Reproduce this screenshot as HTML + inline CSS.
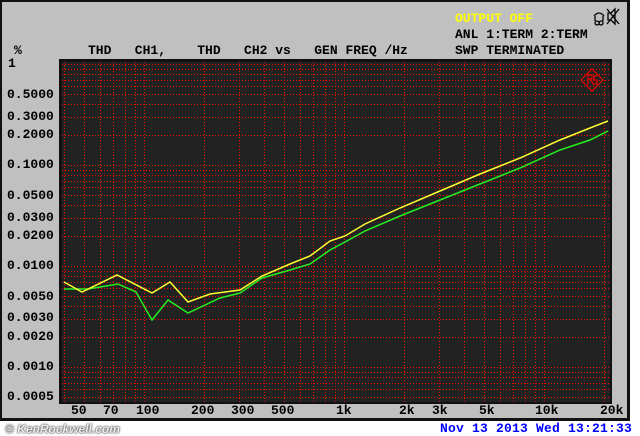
<!DOCTYPE html>
<html><head><style>
body{margin:0;width:640px;height:436px;background:#fff;position:relative;overflow:hidden;font-family:"Liberation Mono",monospace;font-weight:bold;font-size:13px}
#frame{position:absolute;left:0;top:0;width:625px;height:416px;background:#c0c0c0;border:2px solid #111;border-right:3px solid #111;border-bottom:3px solid #111}
.t{position:absolute;white-space:pre;color:#000;line-height:14px}
</style></head><body>
<div id="frame"></div>
<svg width="640" height="436" style="position:absolute;left:0;top:0">
<rect x="59" y="59" width="553" height="345" fill="#111"/>
<rect x="62" y="62" width="548" height="340" fill="#222"/>
<g stroke="#f00" stroke-width="1" stroke-dasharray="1,2" id="g"></g>
<g fill="none" stroke="#e00" stroke-width="1.2">
<path d="M592 69 L603 80 L592 91 L581 80 Z"/>
<path d="M588 75 L588 85 M588 75 L592 75 L592 79 L588 79 M590 79 L594 85 M597 76 L594 76 L594 80 L597 80 L597 84 L594 84"/>
</g>
<g fill="none" stroke="#000" stroke-width="1.3">
<path d="M594 16 Q599 10 604 16 M595 16 L595 21 M603 16 L603 21 M597 21 A2 2 0 1 0 597.1 21 M601 21 A2 2 0 1 0 601.1 21"/>
<path d="M608 13 L608 20 L611 20 L615 24 L615 9 L611 13 Z M607 9 L619 24 M619 9 L607 24"/>
</g>
<polyline fill="none" stroke="#2e2" stroke-width="1.5" points="64,289 88,289 118,284 136,292 152,320 168,300 188,313 220,298 240,293 262,278 290,270 310,264 330,250 345,242 365,231 400,216 440,200 480,184 520,168 560,150 590,140 608,131"/>
<polyline fill="none" stroke="#ff3" stroke-width="1.5" points="64,282 82,292 117,275 152,293 170,282 188,302 210,294 240,290 262,276 290,264 310,256 330,241 345,236 365,224 400,208 440,191 480,174 520,158 560,140 590,128 608,121"/>
</svg>
<div class="t" style="left:14px;top:44px">%</div>
<div class="t" style="left:88px;top:44px">THD   CH1,    THD   CH2 vs   GEN FREQ /Hz</div>
<div class="t" style="left:455px;top:12px;color:#ff0">OUTPUT OFF</div>
<div class="t" style="left:455px;top:28px">ANL 1:TERM 2:TERM</div>
<div class="t" style="left:455px;top:44px">SWP TERMINATED</div>
<div class="t" style="left:8px;top:57px">1</div>
<div class="t" style="left:7px;top:88px">0.5000</div>
<div class="t" style="left:7px;top:110px">0.3000</div>
<div class="t" style="left:7px;top:128px">0.2000</div>
<div class="t" style="left:7px;top:158px">0.1000</div>
<div class="t" style="left:7px;top:189px">0.0500</div>
<div class="t" style="left:7px;top:211px">0.0300</div>
<div class="t" style="left:7px;top:229px">0.0200</div>
<div class="t" style="left:7px;top:259px">0.0100</div>
<div class="t" style="left:7px;top:290px">0.0050</div>
<div class="t" style="left:7px;top:311px">0.0030</div>
<div class="t" style="left:7px;top:330px">0.0020</div>
<div class="t" style="left:7px;top:360px">0.0010</div>
<div class="t" style="left:7px;top:390px">0.0005</div>
<div class="t" style="left:71px;top:404px">50</div>
<div class="t" style="left:103px;top:404px">70</div>
<div class="t" style="left:136px;top:404px">100</div>
<div class="t" style="left:191px;top:404px">200</div>
<div class="t" style="left:231px;top:404px">300</div>
<div class="t" style="left:271px;top:404px">500</div>
<div class="t" style="left:336px;top:404px">1k</div>
<div class="t" style="left:399px;top:404px">2k</div>
<div class="t" style="left:432px;top:404px">3k</div>
<div class="t" style="left:479px;top:404px">5k</div>
<div class="t" style="left:535px;top:404px">10k</div>
<div class="t" style="left:600px;top:404px">20k</div>
<div class="t" style="left:5px;top:422px;color:#eee;font-style:italic;font-family:'Liberation Sans',sans-serif;font-size:12px;text-shadow:0 0 2px #333,0 0 1px #333">© KenRockwell.com</div>
<div class="t" style="left:440px;top:422px;color:#00f;font-size:13px;letter-spacing:0.2px">Nov 13 2013 Wed 13:21:33</div>
<script>
var g=document.getElementById('g'),s='';
function X(f){return 344+200*Math.log10(f/1000);}
function Y(v){return 64-101*Math.log10(v);}
[40,50,60,70,80,90,100,200,300,400,500,600,700,800,900,1000,2000,3000,4000,5000,6000,7000,8000,9000,10000,20000].forEach(function(f){var x=Math.round(X(f))+.5;if(x>62&&x<610)s+='<line x1="'+x+'" y1="62" x2="'+x+'" y2="402"/>';});
[1,0.5,0.3,0.2,0.1,0.05,0.03,0.02,0.01,0.005,0.003,0.002,0.001,0.0005].forEach(function(v){var y=Math.round(Y(v))+.5;if(y>62&&y<402)s+='<line x1="62" y1="'+y+'" x2="610" y2="'+y+'"/>';});
[0.9,0.8,0.7,0.6,0.4,0.09,0.08,0.07,0.06,0.04,0.009,0.008,0.007,0.006,0.004,0.0009,0.0008,0.0007,0.0006].forEach(function(v){var y=Math.round(Y(v))+.5;s+='<line x1="62" y1="'+y+'" x2="610" y2="'+y+'"/>';});
g.innerHTML=s;
</script>
</body></html>
